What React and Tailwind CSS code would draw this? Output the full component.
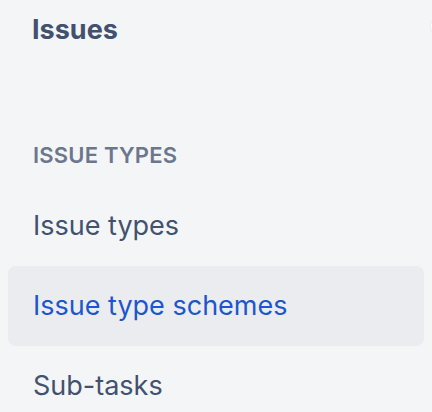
import React from "react";

const items = [
  { label: "Issue types", active: false },
  { label: "Issue type schemes", active: true },
  { label: "Sub-tasks", active: false },
];

export default function App() {
  return (
    <div
      className="relative w-[432px] h-[412px] overflow-hidden bg-[#F4F5F7]"
      style={{ fontFamily: "Inter, 'Noto Sans', 'Liberation Sans', sans-serif" }}
    >
      <div className="absolute left-[430px] top-[12px] w-[28px] h-[28px] rounded-full bg-white border border-[#ebecf0]" />
      <div className="h-[60px] flex items-center pl-[32px] text-[27px] font-bold text-[#42526E]">
        Issues
      </div>
      <div className="mt-[75px] h-[40px] flex items-center pl-[33px] text-[22px] font-semibold uppercase tracking-[0.2px] text-[#6B778C]">
        Issue types
      </div>
      <nav className="mt-[11px] flex flex-col">
        {items.map((it) => (
          <div
            key={it.label}
            className={
              it.active
                ? "mx-[8px] h-[80px] flex items-center pl-[25px] rounded-[8px] bg-[#EBECF0] text-[27px] text-[#1D56CC]"
                : "mx-[8px] h-[80px] flex items-center pl-[25px] rounded-[8px] text-[27px] text-[#42526E]"
            }
          >
            {it.label}
          </div>
        ))}
      </nav>
    </div>
  );
}
